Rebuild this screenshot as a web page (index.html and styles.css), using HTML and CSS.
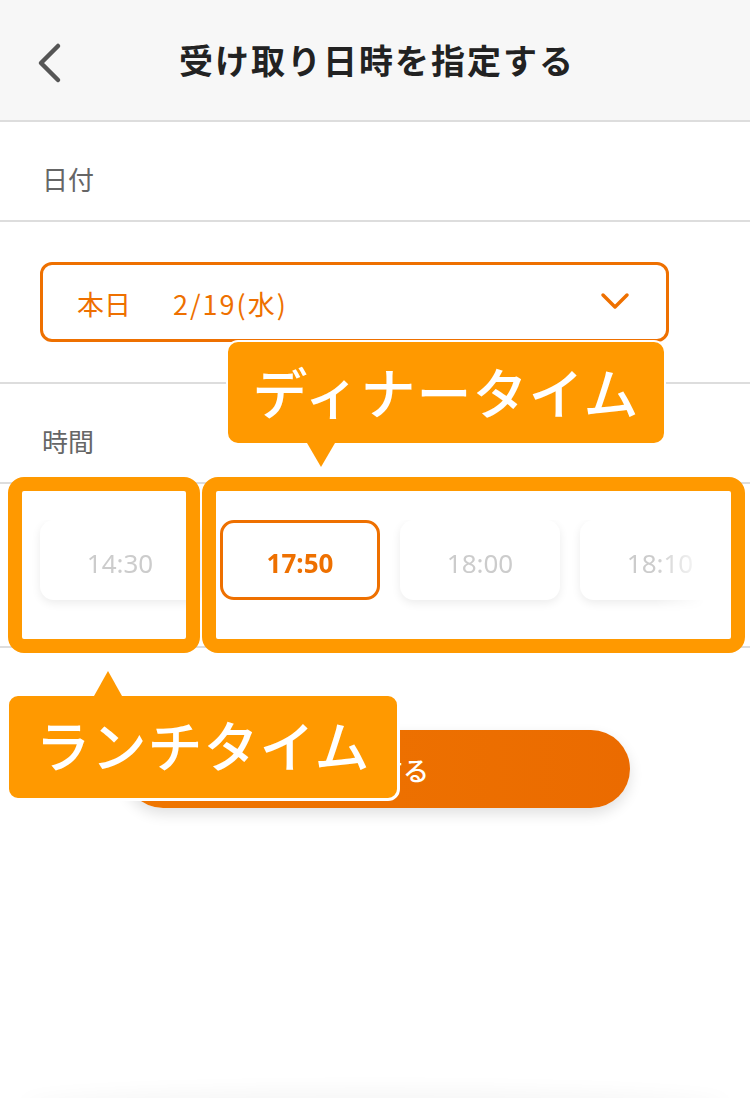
FILE: index.html
```html
<!DOCTYPE html>
<html lang="ja">
<head>
    <meta charset="UTF-8">
    <meta name="viewport" content="width=device-width, initial-scale=1.0">
    <title>受け取り日時を指定する</title>
    <link rel="stylesheet" href="styles.css">
</head>
<body>
    <div class="page">
        <header class="header">
            <a class="back" href="#">
                <svg width="30" height="44" viewBox="0 0 30 44">
                    <polyline points="21,6 4,23 21,40" fill="none" stroke="#555" stroke-width="4.5" stroke-linecap="round" stroke-linejoin="round"/>
                </svg>
            </a>
            <h1>受け取り日時を指定する</h1>
        </header>

        <div class="label-row">日付</div>

        <div class="select-section">
            <div class="select-box">
                <span class="select-text"><span class="day">本日</span><span class="date">2/19(水)</span></span>
                <svg class="select-arrow" width="30" height="20" viewBox="0 0 30 20">
                    <polyline points="3,3 15,15 27,3" fill="none" stroke="#ee7000" stroke-width="3.5" stroke-linecap="round" stroke-linejoin="round"/>
                </svg>
            </div>
        </div>

        <div class="label-row">時間</div>

        <div class="slots-section">
            <div class="slots">
                <div class="slot">14:30</div>
                <div class="slot selected">17:50</div>
                <div class="slot">18:00</div>
                <div class="slot">18:10</div>
                <div class="slot">18:20</div>
            </div>
        </div>

        <div class="button-section">
            <button class="submit">決定する</button>
        </div>

        <div class="bottom-shade"></div>

        <!-- 説明用の注釈 -->
        <div class="mark mark-lunch"></div>
        <div class="mark mark-dinner"></div>
        <div class="tip tip-dinner">ディナータイム</div>
        <div class="tip tip-lunch">ランチタイム</div>
    </div>
</body>
</html>
```

FILE: styles.css
```css
body {
    margin: 0;
    padding: 0;
    background-color: #ffffff;
    font-family: "Noto Sans", "Noto Sans CJK JP", sans-serif;
}
.page {
    position: relative;
    width: 750px;
    height: 1098px;
    overflow: hidden;
}
.header {
    position: relative;
    height: 120px;
    background-color: #f7f7f7;
    border-bottom: 2px solid #dddddd;
    display: flex;
    align-items: center;
    justify-content: center;
}
.header h1 {
    margin: 0;
    font-family: "Noto Sans CJK JP", sans-serif;
    font-size: 34px;
    font-weight: 700;
    letter-spacing: 2px;
    color: #222222;
    padding: 0 0 2px 4px;
}
.back {
    position: absolute;
    left: 37px;
    top: 40px;
    display: block;
}
.label-row {
    height: 100px;
    box-sizing: border-box;
    padding: 42px 0 0 42px;
    font-family: "Noto Sans CJK JP", sans-serif;
    font-size: 26px;
    line-height: 30px;
    color: #666666;
    border-bottom: 2px solid #dddddd;
}
.label-row + .slots-section {
    margin-top: 2px;
}
.select-section {
    padding: 40px 81px 40px 40px;
    border-bottom: 2px solid #dddddd;
}
.select-box {
    height: 80px;
    box-sizing: border-box;
    border: 3px solid #ee7000;
    border-radius: 12px;
    display: flex;
    align-items: center;
    justify-content: space-between;
    padding: 0 36px 0 34px;
}
.select-text {
    font-family: "Noto Sans CJK JP", sans-serif;
    font-size: 27px;
    color: #ee7000;
    padding-top: 2px;
}
.select-text .date {
    margin-left: 42px;
    letter-spacing: 2px;
}
.slots-section {
    height: 162px;
    box-sizing: border-box;
    padding-top: 34px;
    border-bottom: 2px solid #dddddd;
}
.slots {
    display: flex;
    gap: 20px;
    padding-left: 40px;
    width: 705px;
    box-sizing: border-box;
    overflow: hidden;
    padding-bottom: 20px;
    -webkit-mask-image: linear-gradient(to right, #000 655px, transparent 705px);
    mask-image: linear-gradient(to right, #000 655px, transparent 705px);
}
.slot {
    flex: 0 0 160px;
    height: 80px;
    box-sizing: border-box;
    background-color: #ffffff;
    border-radius: 14px;
    box-shadow: 0 3px 10px rgba(0, 0, 0, 0.08);
    display: flex;
    align-items: center;
    justify-content: center;
    font-size: 26px;
    color: #cccccc;
    padding-top: 6px;
}
.slot.selected {
    border: 3px solid #ee7000;
    color: #ee7000;
    font-weight: 700;
    box-shadow: none;
}
.button-section {
    padding-top: 82px;
    display: flex;
    justify-content: center;
}
.submit {
    width: 506px;
    height: 78px;
    margin-left: 4px;
    border: none;
    border-radius: 39px;
    background: linear-gradient(to right, #ef7600, #eb6b00);
    box-shadow: 0 6px 14px rgba(0, 0, 0, 0.12);
    color: #ffffff;
    font-family: "Noto Sans CJK JP", sans-serif;
    font-size: 26px;
    font-weight: 500;
    cursor: pointer;
}
.bottom-shade {
    position: absolute;
    left: 20px;
    right: 20px;
    bottom: -30px;
    height: 30px;
    border-radius: 50%;
    box-shadow: 0 -8px 20px rgba(0, 0, 0, 0.04);
}
.mark {
    position: absolute;
    top: 477px;
    height: 176px;
    box-sizing: border-box;
    border: 14px solid #ff9900;
    border-radius: 16px;
}
.mark-lunch {
    left: 8px;
    width: 192px;
}
.mark-dinner {
    left: 202px;
    width: 543px;
}
.tip {
    position: absolute;
    box-sizing: border-box;
    background-color: #ff9900;
    color: #ffffff;
    font-family: "Noto Sans CJK JP", sans-serif;
    font-size: 55px;
    font-weight: 500;
    letter-spacing: 1px;
    display: flex;
    align-items: center;
    justify-content: center;
    border-radius: 12px;
}
.tip::after {
    content: "";
    position: absolute;
    width: 0;
    height: 0;
    border-left: 14px solid transparent;
    border-right: 14px solid transparent;
}
.tip-dinner {
    left: 226px;
    top: 340px;
    width: 440px;
    height: 105px;
    border: 2px solid #ffffff;
    padding-bottom: 6px;
}
.tip-dinner::after {
    left: 79px;
    bottom: -24px;
    border-top: 24px solid #ff9900;
}
.tip-lunch {
    left: 6px;
    top: 693px;
    width: 394px;
    height: 108px;
    border: 3px solid #ffffff;
    padding-bottom: 8px;
}
.tip-lunch::after {
    left: 85px;
    top: -25px;
    border-bottom: 25px solid #ff9900;
}
```
